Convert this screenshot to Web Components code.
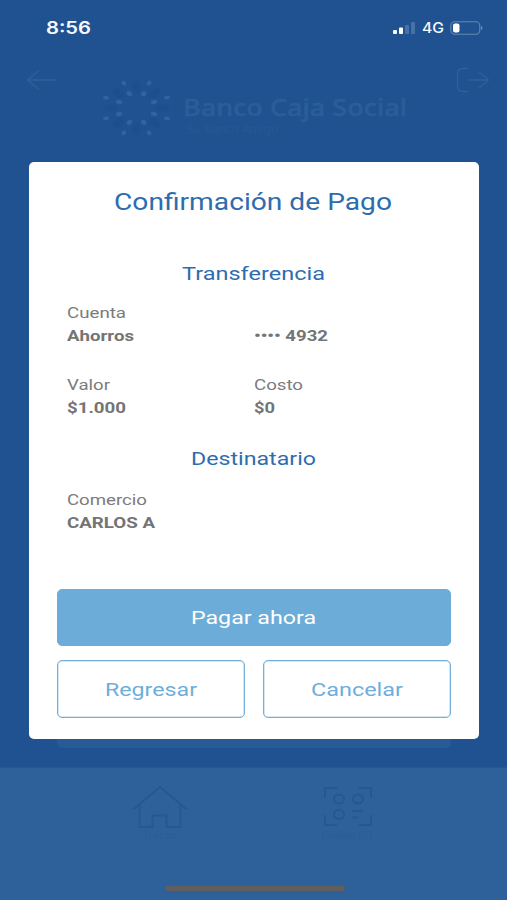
<!DOCTYPE html>
<html lang="es">
<head>
<meta charset="utf-8">
<title>Confirmación de Pago</title>
<style>
  body {
    margin: 0;
    font-family: Roboto, "Liberation Sans", sans-serif;
    background: #205291;
  }
</style>
</head>
<body>
<bank-app>
  <status-bar time="8:56" network="4G"></status-bar>
  <bank-header></bank-header>
  <tab-bar slot="tabs"></tab-bar>
  <confirm-dialog slot="dialog" heading="Confirmación de Pago">
    <dialog-section heading="Transferencia" width="143">
      <data-field label="Cuenta" label-width="59" value="Ahorros" value-width="67"></data-field>
      <data-field value="•••• 4932" value-width="74"></data-field>
      <data-field label="Valor" label-width="43" value="$1.000" value-width="59"></data-field>
      <data-field label="Costo" label-width="49" value="$0" value-width="21"></data-field>
    </dialog-section>
    <dialog-section heading="Destinatario" width="125">
      <data-field label="Comercio" label-width="80" value="CARLOS A" value-width="88"></data-field>
    </dialog-section>
    <bank-button slot="actions" primary width="125">Pagar ahora</bank-button>
    <bank-button slot="actions" width="92">Regresar</bank-button>
    <bank-button slot="actions" width="92">Cancelar</bank-button>
  </confirm-dialog>
</bank-app>

<script>
const createTemplate = (html) => {
  const template = document.createElement("template");
  template.innerHTML = html;
  return template;
};

const attach = (element, template) => {
  const shadow = element.attachShadow({ mode: "open" });
  shadow.appendChild(template.content.cloneNode(true));
  return shadow;
};

// one line of text, widened to the given width
const fitTemplate = createTemplate(`
  <style>
    :host {
      display: block;
      white-space: nowrap;
    }
    #text {
      display: block;
      width: max-content;
      transform-origin: 0 50%;
    }
  </style>
  <span id="text"><slot></slot></span>
`);

class FitText extends HTMLElement {
  constructor() {
    super();
    this.text = attach(this, fitTemplate).querySelector("#text");
  }

  connectedCallback() {
    this.fit();
  }

  fit() {
    const width = Number(this.getAttribute("width"));
    if (!width || !this.text.offsetWidth) return;
    const natural = this.text.getBoundingClientRect().width;
    this.style.width = `${width}px`;
    this.text.style.transform = `scaleX(${width / natural})`;
  }
}

const appTemplate = createTemplate(`
  <style>
    :host {
      display: grid;
      grid-template-rows: 1fr 133px;
      position: relative;
      height: 900px;
      overflow: hidden;
    }
    main {
      display: flex;
      flex-direction: column;
    }
    .card {
      flex: 1;
      margin: 12px 56px 19px 57px;
      background: linear-gradient(#205291 97%, #285b95 97%);
      border-radius: 5px;
    }
  </style>
  <main>
    <slot></slot>
    <div class="card"></div>
  </main>
  <slot name="tabs"></slot>
  <slot name="dialog"></slot>
`);

class BankApp extends HTMLElement {
  constructor() {
    super();
    attach(this, appTemplate);
  }
}

const statusTemplate = createTemplate(`
  <style>
    :host {
      display: flex;
      align-items: center;
      justify-content: space-between;
      height: 55px;
      padding: 0 24px 0 46px;
      color: #f6faff;
      font-family: Inter, "Liberation Sans", sans-serif;
    }
    .time {
      font-size: 17px;
      font-weight: 600;
    }
    .right {
      display: flex;
      align-items: center;
    }
    .network {
      font-size: 14px;
      font-weight: 500;
      margin: 0 6px 0 6px;
    }
    svg { display: block; }
  </style>
  <fit-text class="time" width="45"></fit-text>
  <div class="right">
    <svg width="24" height="14" viewBox="0 0 24 14">
      <rect x="1" y="9" width="4" height="4" rx="1" fill="#fff"/>
      <rect x="7" y="6.5" width="4" height="6.5" rx="1" fill="#fff"/>
      <rect x="13" y="4" width="4" height="9" rx="1" fill="#4672a8"/>
      <rect x="19" y="1" width="4" height="12" rx="1" fill="#4672a8"/>
    </svg>
    <fit-text class="network" width="22"></fit-text>
    <svg width="33" height="14" viewBox="0 0 33 14">
      <rect x=".8" y=".7" width="29" height="12.6" rx="4" fill="none" stroke="#6589ab" stroke-width="1.1"/>
      <rect x="3" y="2.5" width="6.5" height="9" rx="2" fill="#fff"/>
      <path d="M31.2 5c1.6.7 1.6 3.3 0 4z" fill="#7f9dbd"/>
    </svg>
  </div>
`);

class StatusBar extends HTMLElement {
  constructor() {
    super();
    const shadow = attach(this, statusTemplate);
    shadow.querySelector(".time").textContent = this.getAttribute("time");
    shadow.querySelector(".network").textContent = this.getAttribute("network");
  }
}

const headerTemplate = createTemplate(`
  <style>
    :host {
      display: grid;
      grid-template-columns: 75px 1fr 34px;
      height: 95px;
      padding: 0 17px 0 26px;
      color: #2e609a;
    }
    svg { display: block; }
    .back { margin-top: 14px; }
    .exit { margin-top: 12px; }
    .brand {
      display: flex;
      gap: 11px;
      padding-top: 23px;
    }
    .name {
      display: flex;
      flex-direction: column;
      padding-top: 12px;
      font-family: "Noto Sans", sans-serif;
    }
    .bank {
      color: #2b5e99;
      font-size: 24px;
      font-weight: 500;
      line-height: 34px;
      -webkit-text-stroke: .4px;
    }
    .slogan {
      color: #265892;
      font-size: 10px;
      line-height: 12px;
      margin: -1px 0 0 4px;
    }
  </style>
  <svg class="back" width="32" height="22" viewBox="0 0 32 22" fill="none" stroke="currentColor" stroke-width="1.3">
    <path d="M13 1.500L1.500 11L13 20.500M1.500 11H30"/>
  </svg>
  <div class="brand">
    <svg class="logo" width="71" height="60" viewBox="0 0 71 60"></svg>
    <div class="name">
      <fit-text class="bank" width="224">Banco Caja Social</fit-text>
      <fit-text class="slogan" width="91">Su Banco Amigo</fit-text>
    </div>
  </div>
  <svg class="exit" width="34" height="26" viewBox="0 0 34 26" fill="none" stroke="currentColor" stroke-width="1.3">
    <path d="M11.500 1.500H8Q1.500 1.500 1.500 6V20Q1.500 24.500 8 24.500H11.500M12.500 13H32.500M23 5L32.500 13L23 21"/>
  </svg>
`);

class BankHeader extends HTMLElement {
  constructor() {
    super();
    this.logo = attach(this, headerTemplate).querySelector(".logo");
    this.drawLogo();
  }

  // two rings of light petals, with darker ones between them
  drawLogo() {
    let petals = "";
    const petal = (radius, angle, rx, ry, fill) => {
      petals += `<g transform="translate(35.500 30) scale(1.22 1) rotate(${angle}) translate(${radius} 0)"><ellipse rx="${rx}" ry="${ry}" fill="${fill}"/></g>`;
    };
    for (let i = 0; i < 8; i++) {
      petal(21, i * 45, 6, 3.6, "#1f4e8f");
      petal(15.5, i * 45 + 22.5, 2.7, 2.1, "#3064a0");
      petal(27, i * 45 + 22.5, 2.5, 1.7, "#3064a0");
    }
    this.logo.innerHTML = petals;
  }
}

const tabTemplate = createTemplate(`
  <style>
    :host {
      display: grid;
      grid-template-columns: 187px 187px;
      grid-template-rows: 1fr 18px;
      justify-content: center;
      box-sizing: border-box;
      padding-top: 17px;
      background: #2e6199;
      border-top: 1px solid #28588f;
      color: #265790;
    }
    .tab {
      display: flex;
      flex-direction: column;
      align-items: center;
      font-size: 10px;
      line-height: 12px;
      gap: 1px;
    }
    .tab fit-text { color: #2b5d96; }
    .indicator {
      grid-column: 1 / 3;
      width: 180px;
      height: 5px;
      margin: 4px 0 0 98px;
      border-radius: 3px;
      background: #605e5f;
    }
  </style>
  <div class="tab">
    <svg width="56" height="44" viewBox="0 0 56 44" fill="none" stroke="currentColor" stroke-width="1.8">
      <path d="M1 24.500L28 2L55 24.500M7.500 20V42H20.500V30.500H34.500V42H48.500V20"/>
    </svg>
    <fit-text width="33">Inicio</fit-text>
  </div>
  <div class="tab">
    <svg width="50" height="44" viewBox="-1 1 50 44" fill="none" stroke="currentColor" stroke-width="2">
      <path d="M2 14V4H14M36 4H48V14M2 31V41H14M36 41H48V31"/>
      <ellipse cx="16" cy="15" rx="5" ry="4.500"/>
      <ellipse cx="35" cy="15" rx="5" ry="4.500"/>
      <ellipse cx="16" cy="30.500" rx="5" ry="4.500"/>
      <path d="M29 27H40M29 33.500H35"/>
    </svg>
    <fit-text width="50">Código QR</fit-text>
  </div>
  <div class="indicator"></div>
`);

class TabBar extends HTMLElement {
  constructor() {
    super();
    attach(this, tabTemplate);
  }
}

const dialogTemplate = createTemplate(`
  <style>
    :host {
      position: absolute;
      inset: 0;
      box-sizing: border-box;
      padding: 162px 28px 161px 29px;
    }
    .panel {
      display: flex;
      flex-direction: column;
      box-sizing: border-box;
      height: 577px;
      padding: 21px 28px 21px;
      background: #fff;
      border-radius: 5px;
    }
    .heading {
      align-self: center;
      color: #2e6cb0;
      font-size: 23px;
      line-height: 40px;
      margin: 0 2px 39px 0;
    }
    .sections {
      flex: 1;
      display: flex;
      flex-direction: column;
      gap: 27px;
      padding: 0 10px 0 9.5px;
    }
    .actions {
      display: grid;
      grid-template-columns: 1fr 1fr;
      grid-auto-rows: 58px;
      grid-template-rows: 57px;
      gap: 14px 18px;
    }
  </style>
  <div class="panel">
    <fit-text class="heading" width="278"></fit-text>
    <div class="sections"><slot></slot></div>
    <div class="actions"><slot name="actions"></slot></div>
  </div>
`);

class ConfirmDialog extends HTMLElement {
  constructor() {
    super();
    const shadow = attach(this, dialogTemplate);
    shadow.querySelector(".heading").textContent = this.getAttribute("heading");
  }
}

const sectionTemplate = createTemplate(`
  <style>
    :host {
      display: flex;
      flex-direction: column;
    }
    .heading {
      align-self: center;
      color: #2e6cb0;
      font-size: 19px;
      line-height: 24px;
      margin: 0 1px 16px 0;
    }
    :host(:last-of-type) .heading { margin-bottom: 18px; }
    .fields {
      display: grid;
      grid-template-columns: 187px 187px;
      row-gap: 26px;
    }
  </style>
  <fit-text class="heading"></fit-text>
  <div class="fields"><slot></slot></div>
`);

class DialogSection extends HTMLElement {
  constructor() {
    super();
    const heading = attach(this, sectionTemplate).querySelector(".heading");
    heading.textContent = this.getAttribute("heading");
    heading.setAttribute("width", this.getAttribute("width"));
  }
}

const fieldTemplate = createTemplate(`
  <style>
    :host {
      display: flex;
      flex-direction: column;
      justify-content: flex-end;
      align-items: flex-start;
      color: #7b7b7b;
      font-size: 15px;
      line-height: 23px;
    }
    .value {
      color: #747474;
      font-weight: 700;
    }
  </style>
  <fit-text class="label"></fit-text>
  <fit-text class="value"></fit-text>
`);

class DataField extends HTMLElement {
  constructor() {
    super();
    const shadow = attach(this, fieldTemplate);
    for (const name of ["label", "value"]) {
      const line = shadow.querySelector(`.${name}`);
      if (!this.hasAttribute(name)) {
        line.remove();
        continue;
      }
      line.textContent = this.getAttribute(name);
      line.setAttribute("width", this.getAttribute(`${name}-width`));
    }
  }
}

const buttonTemplate = createTemplate(`
  <style>
    :host {
      display: flex;
      align-items: center;
      justify-content: center;
      box-sizing: border-box;
      border: 1px solid #74b0da;
      box-shadow: inset 0 0 0 .5px #a9cfe8;
      border-radius: 5px;
      color: #6eaedb;
      font-size: 19px;
      line-height: 24px;
      cursor: pointer;
    }
    :host([primary]) {
      grid-column: 1 / 3;
      background: #6badd8;
      border-color: #6badd8;
      box-shadow: none;
      color: #fff;
    }
    fit-text { margin: 1px 1px 0 0; }
  </style>
  <fit-text></fit-text>
`);

class BankButton extends HTMLElement {
  constructor() {
    super();
    const label = attach(this, buttonTemplate).querySelector("fit-text");
    label.textContent = this.textContent;
    label.setAttribute("width", this.getAttribute("width"));
  }
}

customElements.define("bank-app", BankApp);
customElements.define("status-bar", StatusBar);
customElements.define("bank-header", BankHeader);
customElements.define("tab-bar", TabBar);
customElements.define("confirm-dialog", ConfirmDialog);
customElements.define("dialog-section", DialogSection);
customElements.define("data-field", DataField);
customElements.define("bank-button", BankButton);
// last, so that every label is in place when it is measured
customElements.define("fit-text", FitText);
</script>
</body>
</html>
